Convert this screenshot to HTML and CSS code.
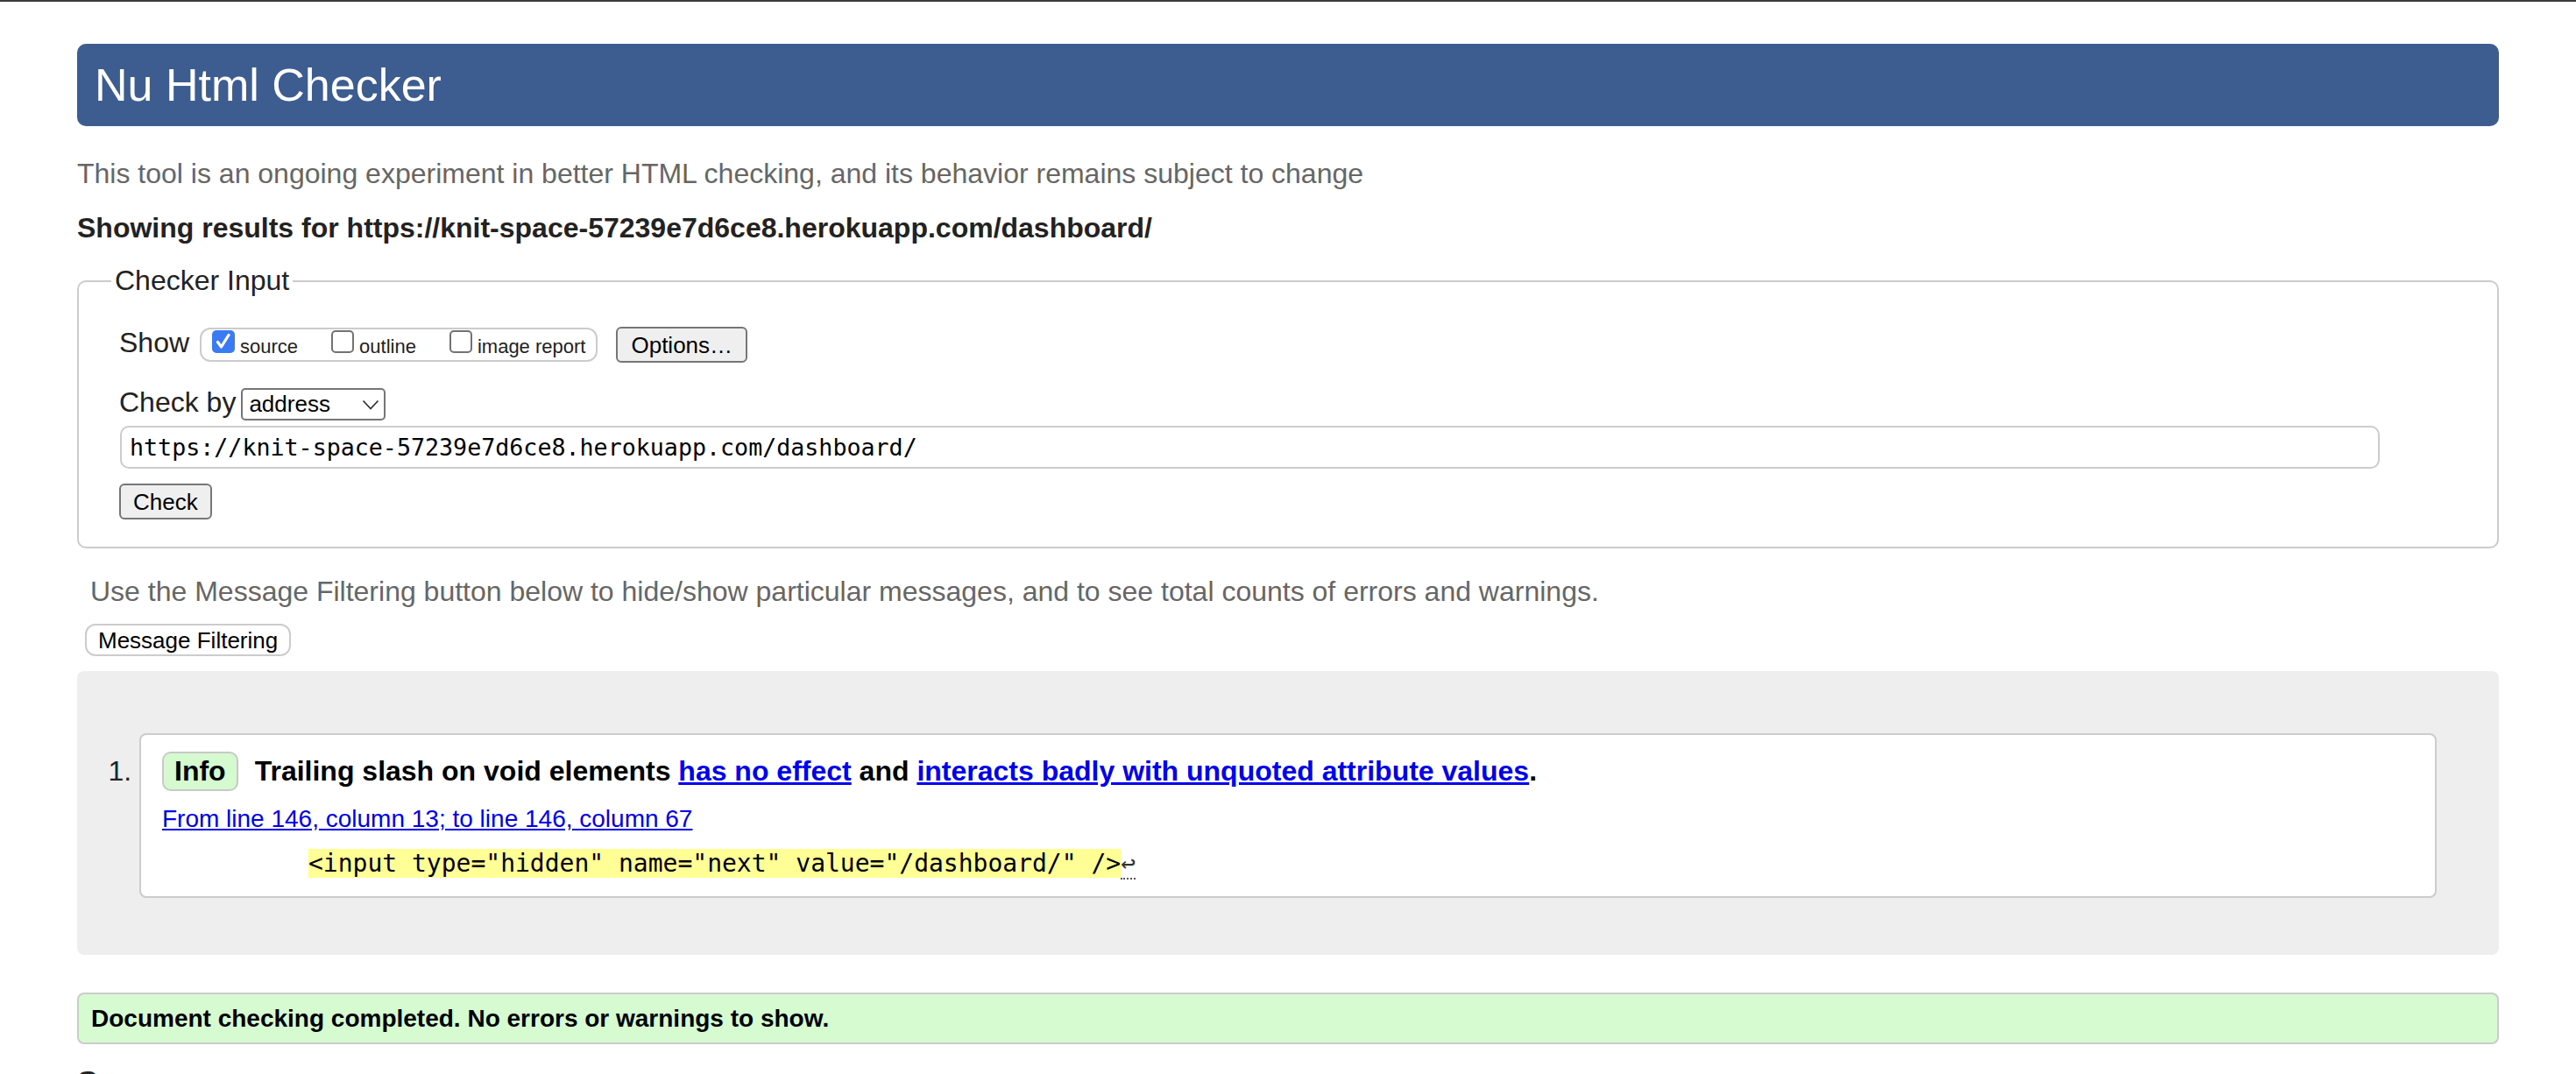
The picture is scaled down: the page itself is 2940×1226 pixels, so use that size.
FILE: index.html
```html
<!DOCTYPE html>
<html lang="en">
<head>
<meta charset="utf-8">
<title>Showing results for https://knit-space-57239e7d6ce8.herokuapp.com/dashboard/ - Nu Html Checker</title>
<link rel="stylesheet" href="styles.css">
</head>
<body>
<h1 class="title">Nu Html Checker</h1>
<p class="intro">This tool is an ongoing experiment in better HTML checking, and its behavior remains subject to change</p>
<p class="showing">Showing results for https://knit-space-57239e7d6ce8.herokuapp.com/dashboard/</p>
<form class="checker">
  <fieldset class="input-set">
    <legend class="input-legend">Checker Input</legend>
    <div class="row row-show">
      <span class="row-label">Show</span>
      <span class="show-group"><span class="opt"><span class="cb cb-on"><svg class="tick" width="26" height="26" viewBox="0 0 26 26"><path d="M6.5 13.5 L10.5 19 L19 5.5" fill="none" stroke="#fff" stroke-width="3.2" stroke-linecap="round" stroke-linejoin="round"/></svg></span><span class="opt-text">source</span></span><span class="opt"><span class="cb"></span><span class="opt-text">outline</span></span><span class="opt"><span class="cb"></span><span class="opt-text">image report</span></span></span>
      <button type="button" class="btn btn-options">Options…</button>
    </div>
    <div class="row row-by">
      <span class="row-label">Check by</span>
      <span class="select"><span class="select-value">address</span><svg class="chevron" width="20" height="12" viewBox="0 0 20 12"><path d="M1.5 1.5 L10 10.5 L18.5 1.5" fill="none" stroke="#333" stroke-width="1.8"/></svg></span>
    </div>
    <div class="row row-url"><input class="url" type="url" value="https://knit-space-57239e7d6ce8.herokuapp.com/dashboard/"></div>
    <div class="row row-submit"><button type="button" class="btn btn-check">Check</button></div>
  </fieldset>
</form>
<p class="hint">Use the Message Filtering button below to hide/show particular messages, and to see total counts of errors and warnings.</p>
<div class="filter-wrap"><button type="button" class="filter-btn">Message Filtering</button></div>
<div class="results">
  <ol class="messages">
    <li class="message">
      <p class="msg-line"><span class="badge">Info</span><span class="msg-text">Trailing slash on void elements <a href="#">has no effect</a> and <a href="#">interacts badly with unquoted attribute values</a>.</span></p>
      <p class="loc"><a href="#">From line 146, column 13; to line 146, column 67</a></p>
      <p class="extract"><code class="code"><mark class="hl">&lt;input type="hidden" name="next" value="/dashboard/" /&gt;</mark><span class="lf" title="Line break">↩</span></code></p>
    </li>
  </ol>
</div>
<p class="success">Document checking completed. No errors or warnings to show.</p>
<h2 class="source-title">Source</h2>
</body>
</html>
```

FILE: styles.css
```css
html {
  border-top: 2px solid #3c3c3c;
  background: #fff;
}

body {
  margin: 0 88px;
  font-family: "Liberation Sans", Arial, Helvetica, sans-serif;
  font-size: 32px;
  line-height: 37px;
  color: #222;
}

.title {
  margin: 48px 0 0;
  padding: 18px 20px;
  background: #3d5c90;
  color: #fff;
  font-size: 52px;
  line-height: 58px;
  font-weight: normal;
  border-radius: 10px;
}

.intro {
  margin: 36px 0 0;
  color: #666;
}

.showing {
  margin: 25px 0 0;
  font-weight: bold;
}

.checker {
  margin: 23px 0 0;
}

.input-set {
  margin: 0;
  min-width: 0;
  border: 2px solid #ccc;
  border-radius: 10px;
  padding: 34px 46px 31px;
}

.input-legend {
  padding: 0 4px;
  margin-left: -9px;
}

.row {
  display: flex;
  align-items: flex-start;
}

.row-label {
  line-height: 37px;
}

.show-group {
  display: inline-block;
  margin: 1px 0 0 12px;
  padding: 1px 12px 3px 12px;
  border: 2px solid #ccc;
  border-radius: 12px;
  font-size: 22px;
  line-height: 25px;
  white-space: nowrap;
}

.opt {
  display: inline;
}

.opt + .opt {
  margin-left: 38px;
}

.cb {
  display: inline-block;
  box-sizing: border-box;
  width: 26px;
  height: 26px;
  border: 2px solid #727272;
  border-radius: 5px;
  background: #fff;
  vertical-align: baseline;
}

.cb-on {
  border: none;
  background: #3a7bf3;
}

.tick {
  display: block;
}

.opt-text {
  margin-left: 6px;
}

.btn {
  font-family: "Liberation Sans", Arial, Helvetica, sans-serif;
  font-size: 26px;
  line-height: 30px;
  height: 41px;
  padding: 0 14px;
  background: #efefef;
  color: #000;
  border: 2px solid #767676;
  border-radius: 6px;
}

.btn-options {
  margin-left: 21px;
  padding: 0 15px;
}

.row-by {
  margin-top: 27px;
}

.select {
  display: flex;
  align-items: center;
  justify-content: space-between;
  box-sizing: border-box;
  width: 165px;
  height: 37px;
  margin: 2px 0 0 6px;
  padding: 0 5px 0 7px;
  border: 2px solid #767676;
  border-radius: 5px;
  font-size: 26px;
  line-height: 33px;
  color: #000;
  background: #fff;
}

.chevron {
  display: block;
}

.row-url {
  margin-top: 6px;
}

.url {
  box-sizing: border-box;
  width: 2579px;
  height: 49px;
  margin: 0 0 0 1px;
  padding: 0 9px;
  border: 2px solid #ccc;
  border-radius: 10px;
  font-family: "DejaVu Sans Mono", Menlo, monospace;
  font-size: 26.67px;
  color: #000;
  background: #fff;
  outline: none;
}

.row-submit {
  margin-top: 17px;
}

.hint {
  margin: 31px 0 0;
  padding-left: 15px;
  color: #666;
}

.filter-wrap {
  margin-top: 18px;
}

.filter-btn {
  display: block;
  margin-left: 9px;
  height: 37px;
  padding: 0 13px;
  font-family: "Liberation Sans", Arial, Helvetica, sans-serif;
  font-size: 26px;
  line-height: 30px;
  color: #000;
  background: #fff;
  border: 2px solid #ccc;
  border-radius: 12px;
}

.results {
  margin-top: 17px;
  padding: 71px 71px 65px;
  background: #eee;
  border-radius: 8px;
}

.messages {
  margin: 0;
  padding: 0;
  list-style: decimal outside;
}

.message {
  padding: 19px 24px 21px;
  background: #fff;
  border: 2px solid #ccc;
  border-radius: 8px;
}

.msg-line {
  margin: 0;
  line-height: 37px;
}

.badge {
  display: inline-block;
  margin-right: 19px;
  padding: 2px 12px;
  background: #d5fad0;
  border: 2px solid #c8c8c8;
  border-radius: 10px;
  font-weight: bold;
  color: #000;
}

.msg-text {
  font-weight: bold;
  color: #000;
}

.msg-text a,
.loc a {
  color: #0000ee;
  text-decoration: underline;
}

.loc {
  margin: 16px 0 0;
  font-size: 28px;
  line-height: 32px;
}

.extract {
  margin: 18px 0 0 167px;
  font-family: "DejaVu Sans Mono", Menlo, monospace;
  font-size: 28px;
  line-height: 33px;
  white-space: pre;
}

.code {
  font-family: inherit;
  font-size: inherit;
  color: #000;
}

.hl {
  background: #ffff96;
  color: #000;
}

.lf {
  color: #333;
  border-bottom: 2px dotted #555;
}

.success {
  margin: 43px 0 0;
  padding: 12px 14px 11px;
  background: #d6fbd1;
  border: 2px solid #ccc;
  border-radius: 8px;
  font-size: 28px;
  line-height: 32px;
  font-weight: bold;
  color: #000;
}

.source-title {
  margin: 24px 0 0;
  font-size: 36px;
  line-height: 41px;
  color: #222;
}
```
